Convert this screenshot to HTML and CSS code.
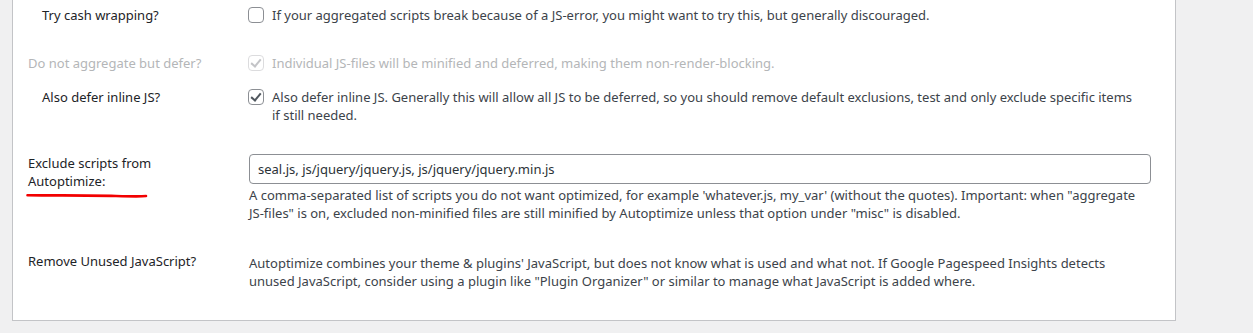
FILE: index.html
```html
<!DOCTYPE html>
<html lang="en">
<head>
  <meta charset="UTF-8">
  <title>Autoptimize - JavaScript Options</title>
  <link rel="stylesheet" href="styles.css">
</head>
<body>
  <div class="panel">

    <div class="row sub">
      <div class="label">Try cash wrapping?</div>
      <label class="check">
        <input type="checkbox" class="cb">
        <span>If your aggregated scripts break because of a JS-error, you might want to try this, but generally discouraged.</span>
      </label>
    </div>

    <div class="row disabled">
      <div class="label">Do not aggregate but defer?</div>
      <label class="check">
        <input type="checkbox" class="cb" checked disabled>
        <span>Individual JS-files will be minified and deferred, making them non-render-blocking.</span>
      </label>
    </div>

    <div class="row sub tight">
      <div class="label">Also defer inline JS?</div>
      <label class="check">
        <input type="checkbox" class="cb" checked>
        <span>Also defer inline JS. Generally this will allow all JS to be deferred, so you should remove default exclusions, test and only exclude specific items if still needed.</span>
      </label>
    </div>

    <div class="row">
      <div class="label">
        Exclude scripts from Autoptimize:
        <!-- red marker someone drew on the screenshot -->
        <svg class="marker" width="122" height="5" viewBox="0 0 122 5">
          <path d="M1.5 2.2 C 30 2.6, 60 2.2, 90 3 S 112 3.2, 120 3" fill="none" stroke="#f20000" stroke-width="2.6" stroke-linecap="round"/>
        </svg>
      </div>
      <div class="field">
        <input type="text" class="text-input" value="seal.js, js/jquery/jquery.js, js/jquery/jquery.min.js">
        <p class="desc">A comma-separated list of scripts you do not want optimized, for example 'whatever.js, my_var' (without the quotes). Important: when "aggregate JS-files" is on, excluded non-minified files are still minified by Autoptimize unless that option under "misc" is disabled.</p>
      </div>
    </div>

    <div class="row">
      <div class="label">Remove Unused JavaScript?</div>
      <div class="field">
        <p class="desc">Autoptimize combines your theme &amp; plugins' JavaScript, but does not know what is used and what not. If Google Pagespeed Insights detects unused JavaScript, consider using a plugin like "Plugin Organizer" or similar to manage what JavaScript is added where.</p>
      </div>
    </div>

  </div>
</body>
</html>
```

FILE: styles.css
```css
body {
  margin: 0;
  background-color: #f0f0f1;
  font-family: 'Noto Sans', 'Open Sans', sans-serif;
  font-size: 13px;
  line-height: 18px;
  color: #3c434a;
}

.panel {
  box-sizing: border-box;
  width: 1164px;
  margin-left: 12px;
  margin-top: -10px;
  padding: 0 24px 15px 15px;
  background-color: #fff;
  border: 1px solid #c3c4c7;
}

.row {
  display: grid;
  grid-template-columns: 221px 1fr;
  padding: 15px 0;
}

.row.tight {
  padding-top: 1px;
}

.label {
  color: #1d2327;
  padding-right: 24px;
}

.row.sub .label {
  padding-left: 14px;
}

.row.disabled,
.row.disabled .label {
  color: #b4b6b8;
}

.check {
  display: flex;
  align-items: flex-start;
  gap: 8px;
  padding-right: 18px;
}

.cb {
  appearance: none;
  -webkit-appearance: none;
  position: relative;
  flex: none;
  width: 16px;
  height: 16px;
  margin: 1px 0 0 -1px;
  border: 1px solid #8c8f94;
  border-radius: 4px;
  background: #fff;
}

.cb:checked::before {
  content: "";
  position: absolute;
  left: 4px;
  top: 1px;
  width: 4px;
  height: 8px;
  border-right: 2px solid #50575e;
  border-bottom: 2px solid #50575e;
  transform: rotate(40deg);
}

.cb:disabled {
  border-color: #dcdcde;
}

.cb:disabled:checked::before {
  border-color: #c3c4c7;
}

.marker {
  display: block;
  margin: 3px 0 0 -2px;
}

.text-input {
  display: block;
  box-sizing: border-box;
  width: 100%;
  height: 30px;
  margin: 0;
  padding: 0 8px;
  border: 1px solid #8c8f94;
  border-radius: 4px;
  font: inherit;
  color: #2c3338;
}

.desc {
  margin: 2px 0 0;
  padding-right: 10px;
}
```
